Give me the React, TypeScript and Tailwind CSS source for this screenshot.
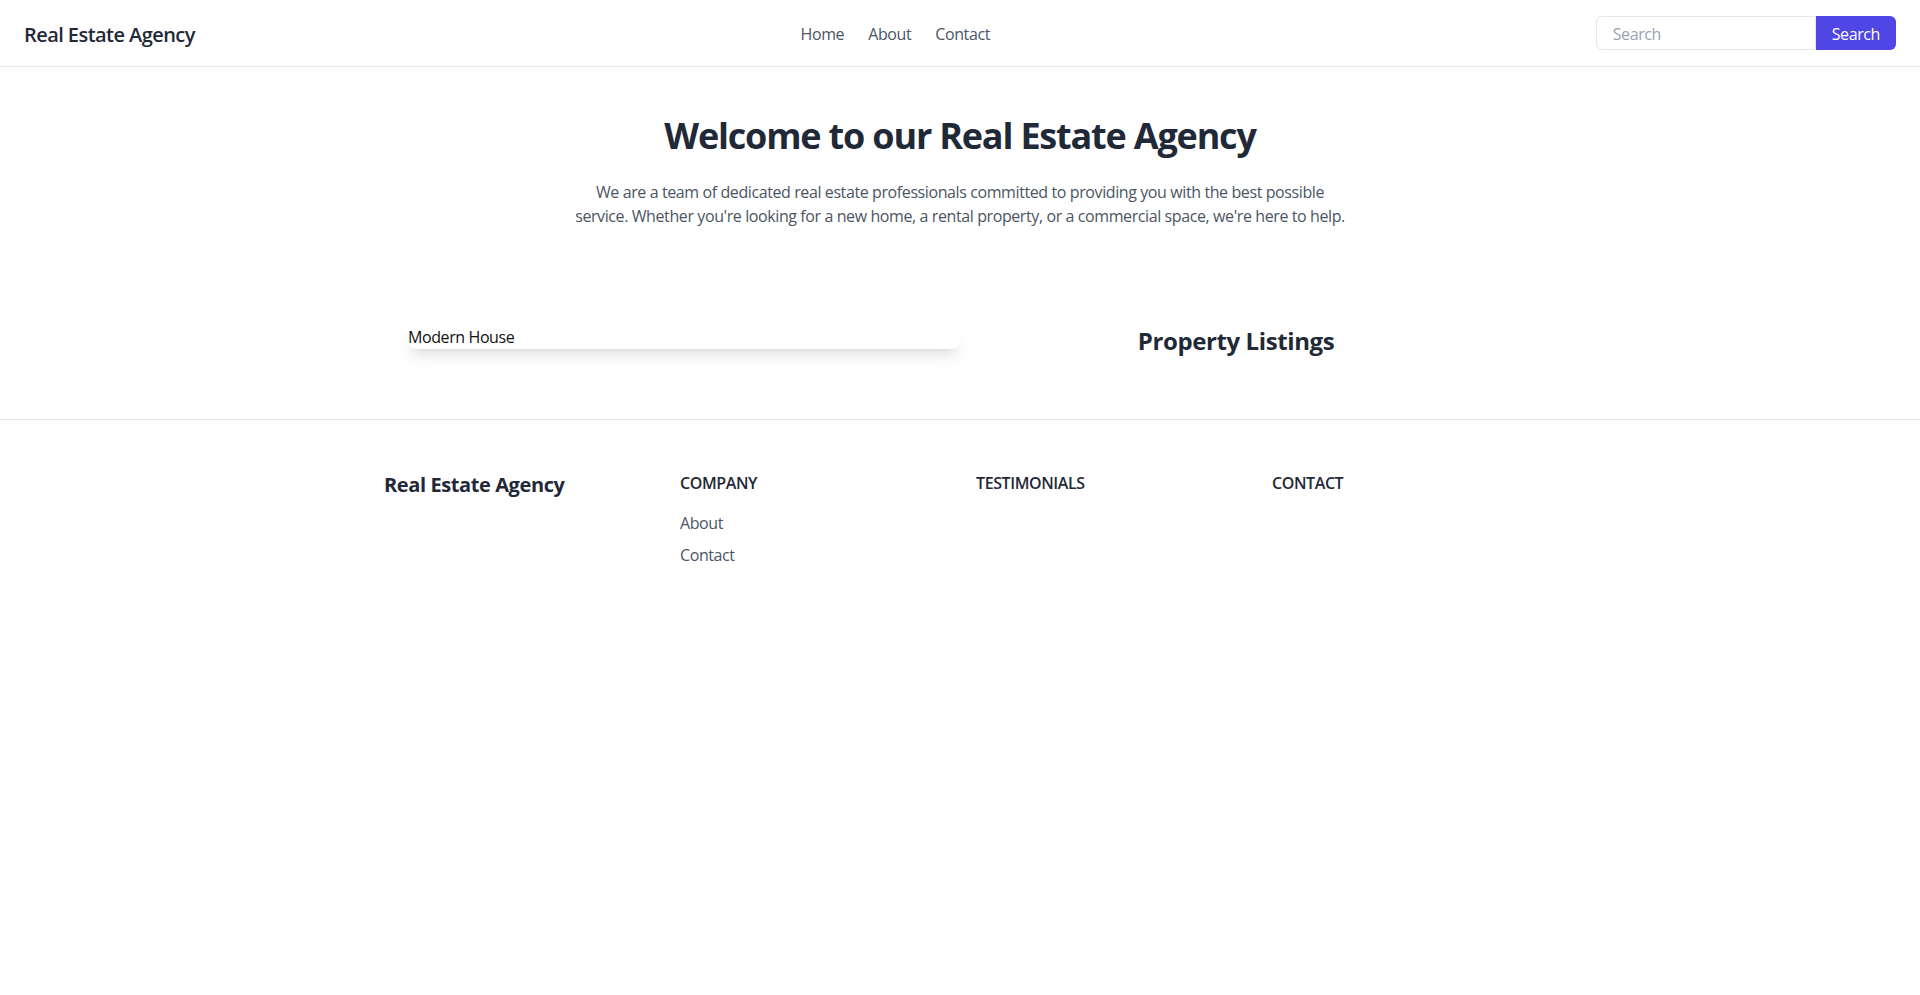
import React from "react";

export default function App() {
  return (
    <div className="min-h-screen bg-white font-['Open_Sans','Noto_Sans',sans-serif] tracking-[-0.025em] text-black">
      <header className="flex items-center justify-between border-b border-[#e5e7eb] px-6 py-4">
        <div className="pt-[3px] text-xl font-semibold tracking-[-0.028em] text-[#1f2937]">Real Estate Agency</div>
        <nav className="flex gap-6 pt-[2px] text-base text-[#4b5563]">
          <a href="#">Home</a>
          <a href="#">About</a>
          <a href="#">Contact</a>
        </nav>
        <div className="flex">
          <input
            type="text"
            placeholder="Search"
            className="w-[220px] rounded-l-md border border-[#e5e7eb] px-4 pt-[5px] pb-[3px] text-base tracking-[-0.025em] text-[#1f2937] placeholder:text-[#9ca3af] outline-none"
          />
          <button className="rounded-r-md bg-[#4f46e5] px-4 pt-[6px] pb-[4px] text-base text-white">Search</button>
        </div>
      </header>

      <section className="pt-12 pb-[50px] text-center">
        <h1 className="mb-6 pt-[1px] text-4xl font-bold tracking-[-0.033em] text-[#1f2937]">
          Welcome to our Real Estate Agency
        </h1>
        <p className="mx-auto max-w-[800px] text-base text-[#4b5563]">
          We are a team of dedicated real estate professionals committed to providing you with the best possible
          <br />
          service. Whether you're looking for a new home, a rental property, or a commercial space, we're here to help.
        </p>
      </section>

      <section className="mx-auto grid max-w-6xl grid-cols-2 items-start px-6 pt-[47px] pb-[62px]">
        <div className="overflow-hidden rounded-lg bg-white shadow-lg">
          <p className="text-base text-[#111]">Modern House</p>
        </div>
        <h2 className="text-center text-2xl font-bold text-[#1f2937]">Property Listings</h2>
      </section>

      <footer className="border-t border-[#e5e7eb] pt-[51px] pb-12">
        <div className="mx-auto grid max-w-6xl grid-cols-4 gap-8">
          <div className="text-xl font-bold text-[#1f2937]">Real Estate Agency</div>
          <div>
            <h3 className="mb-4 text-base font-semibold uppercase text-[#1f2937]">Company</h3>
            <ul className="space-y-2 text-base text-[#4b5563]">
              <li><a href="#">About</a></li>
              <li><a href="#">Contact</a></li>
            </ul>
          </div>
          <div>
            <h3 className="mb-4 text-base font-semibold uppercase text-[#1f2937]">Testimonials</h3>
          </div>
          <div>
            <h3 className="mb-4 text-base font-semibold uppercase text-[#1f2937]">Contact</h3>
          </div>
        </div>
      </footer>
    </div>
  );
}
